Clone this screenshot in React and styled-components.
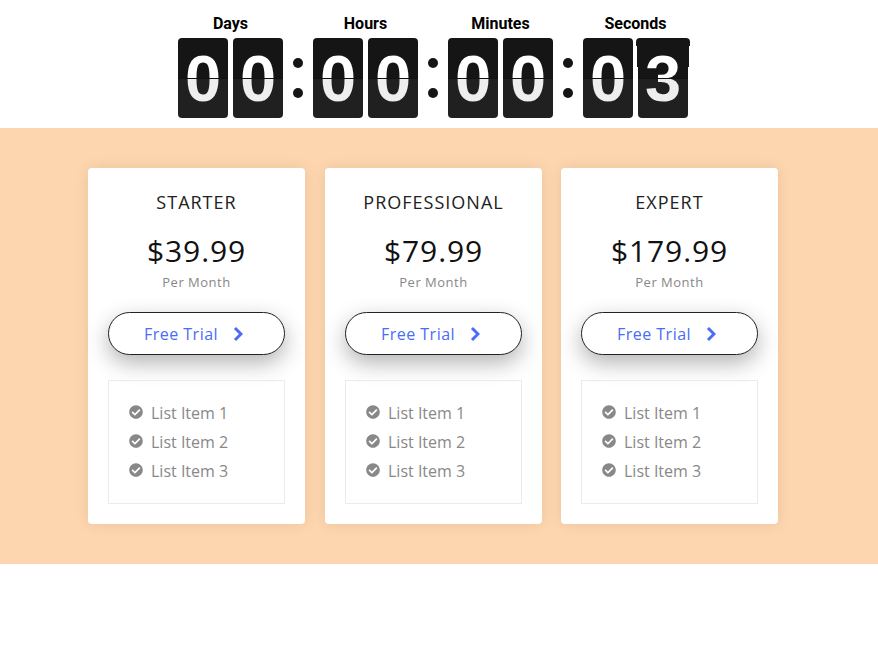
import React from 'react';
import styled, { createGlobalStyle } from 'styled-components';
import { FaCheckCircle } from 'react-icons/fa';

const GlobalStyle = createGlobalStyle`
  * {
    box-sizing: border-box;
  }
  body {
    margin: 0;
    background: #fff;
    font-family: 'Open Sans', 'Noto Sans', sans-serif;
  }
`;

const Countdown = styled.header`
  display: flex;
  justify-content: center;
  height: 128px;
  padding: 13px 12px 0 0;
  font-family: Roboto, sans-serif;
`;

const Unit = styled.div`
  display: flex;
  flex-direction: column;
  align-items: center;
`;

const UnitLabel = styled.span`
  height: 25px;
  font-size: 16px;
  font-weight: 700;
  line-height: 22px;
  color: #000;
`;

const Digits = styled.div`
  display: flex;
  gap: 5px;
`;

const Card = styled.div`
  position: relative;
  isolation: isolate;
  width: 50px;
  height: 80px;
  border-radius: 4px;
  background: linear-gradient(#151515 40px, #111 40px, #111 41px, #202020 41px);
`;

const Digit = styled.div`
  height: 80px;
  background: linear-gradient(#fff 40px, #111 40px, #111 41px, #eee 41px);
  background-clip: text;
  font-family: 'Liberation Sans', Arial, sans-serif;
  font-size: 65px;
  font-weight: 700;
  line-height: 82px;
  text-align: center;
  color: transparent;
`;

// the upper leaf, tilted towards the viewer while it turns
const Leaf = styled.div`
  position: absolute;
  z-index: -1;
  top: 0;
  left: -2px;
  width: 54px;
  height: 29px;
  border-radius: 4px 4px 0 0;
  background: #151515;
  clip-path: polygon(0 0, 100% 0, 100% 8px, 53px 8px, 53px 100%, 1px 100%, 1px 8px, 0 8px);
`;

const Colon = styled.div`
  display: flex;
  flex-direction: column;
  gap: 20px;
  width: 30px;
  padding-top: 45px;
  align-items: center;
`;

const Dot = styled.span`
  width: 10px;
  height: 10px;
  border-radius: 50%;
  background: #151515;
`;

const Pricing = styled.main`
  display: grid;
  grid-template-columns: 237px 236px 217px;
  height: 436px;
  padding: 40px 100px 40px 88px;
  background: #fdd5ae;
`;

const Plan = styled.section`
  display: flex;
  flex-direction: column;
  width: 217px;
  height: 356px;
  padding: 20px;
  border-radius: 4px;
  background: #fff;
  box-shadow: 0 0 15px rgba(0, 0, 0, 0.08);
  text-align: center;
`;

const PlanName = styled.h2`
  margin: 0;
  font-size: 18px;
  font-weight: 400;
  line-height: 29px;
  letter-spacing: 1px;
  text-transform: uppercase;
  color: #212121;
`;

const Price = styled.div`
  margin-top: 14px;
  font-size: 30px;
  line-height: 40px;
  letter-spacing: 0.9px;
  color: #111;
`;

const Period = styled.div`
  font-size: 13px;
  line-height: 22px;
  letter-spacing: 0.5px;
  color: #888;
`;

const TrialButton = styled.button`
  display: flex;
  justify-content: center;
  align-items: center;
  gap: 15px;
  flex: none;
  width: 177px;
  height: 43px;
  margin: 19px 0 25px;
  padding: 0 6px 0 0;
  border: 1px solid #222;
  border-radius: 22px;
  background: #fff;
  box-shadow: 0 8px 22px rgba(0, 0, 0, 0.3);
  font-family: inherit;
  font-size: 16px;
  letter-spacing: 0.5px;
  color: #4a6cf7;
`;

const Chevron = styled.svg`
  width: 10px;
  height: 16px;
  fill: none;
  stroke: currentColor;
  stroke-width: 3;
`;

const Features = styled.ul`
  flex: none;
  height: 124px;
  margin: 0;
  padding: 17px 20px;
  border: 1px solid #ebebeb;
  list-style: none;
`;

const Feature = styled.li`
  display: flex;
  align-items: center;
  height: 29px;
  font-size: 16px;
  color: #888;

  svg {
    width: 14px;
    height: 14px;
    margin: -1px 8px 0 0;
  }
`;

const units = [
  { label: 'Days', digits: ['0', '0'] },
  { label: 'Hours', digits: ['0', '0'] },
  { label: 'Minutes', digits: ['0', '0'] },
  { label: 'Seconds', digits: ['0', '3'], isFlipping: true }
];

const plans = [
  { name: 'Starter', price: '$39.99' },
  { name: 'Professional', price: '$79.99' },
  { name: 'Expert', price: '$179.99' }
];

const features = ['List Item 1', 'List Item 2', 'List Item 3'];

const FlipCard = ({ digit, isFlipping }) => (
  <Card>
    {isFlipping && <Leaf />}
    <Digit>{digit}</Digit>
  </Card>
);

const App = () => (
  <>
    <GlobalStyle />
    <Countdown>
      {units.map(({ label, digits, isFlipping }, index) => (
        <React.Fragment key={label}>
          {index > 0 && (
            <Colon>
              <Dot />
              <Dot />
            </Colon>
          )}
          <Unit>
            <UnitLabel>{label}</UnitLabel>
            <Digits>
              <FlipCard digit={digits[0]} />
              <FlipCard digit={digits[1]} isFlipping={isFlipping} />
            </Digits>
          </Unit>
        </React.Fragment>
      ))}
    </Countdown>
    <Pricing>
      {plans.map(({ name, price }) => (
        <Plan key={name}>
          <PlanName>{name}</PlanName>
          <Price>{price}</Price>
          <Period>Per Month</Period>
          <TrialButton type="button">
            Free Trial
            <Chevron viewBox="0 0 10 16">
              <path d="M2 2l6 6-6 6" />
            </Chevron>
          </TrialButton>
          <Features>
            {features.map((feature) => (
              <Feature key={feature}>
                <FaCheckCircle />
                {feature}
              </Feature>
            ))}
          </Features>
        </Plan>
      ))}
    </Pricing>
  </>
);

export default App;
